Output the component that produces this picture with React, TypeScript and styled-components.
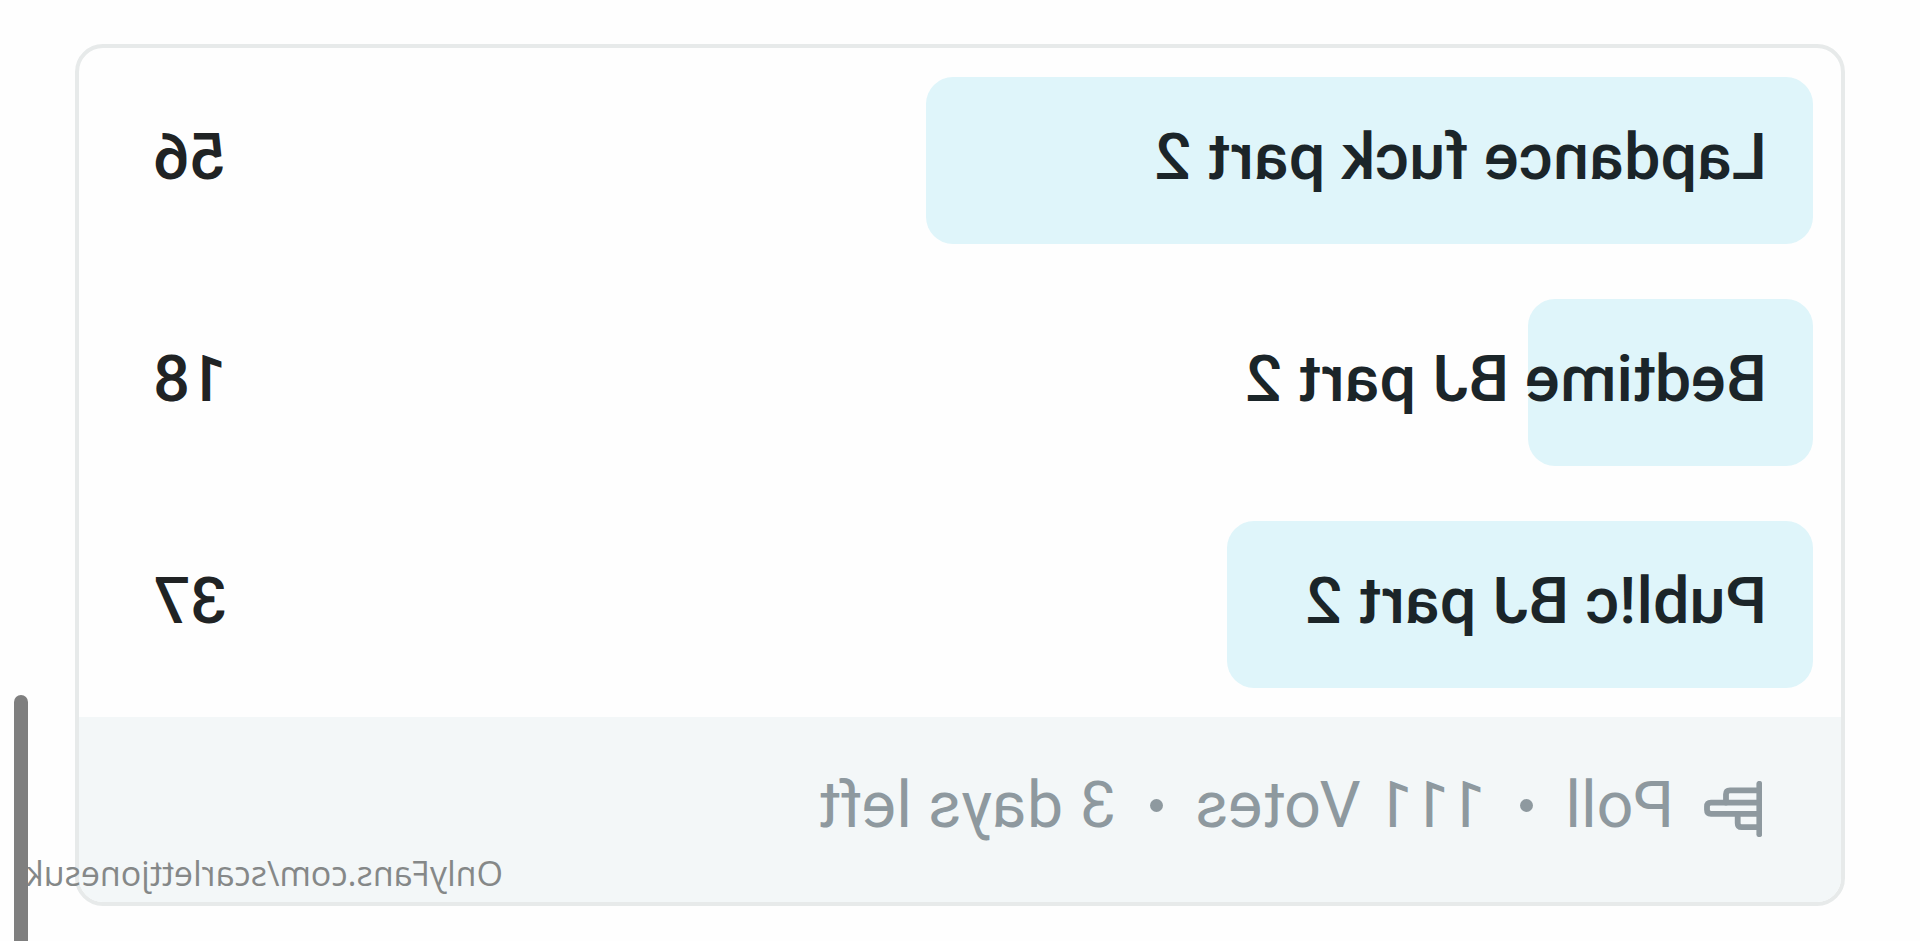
import styled, { createGlobalStyle } from "styled-components";

const options = [
  { label: "Lapdance fuck part 2", votes: 56, width: 887 },
  { label: "Bedtime BJ part 2", votes: 18, width: 285 },
  { label: "Publ!c BJ part 2", votes: 37, width: 586 },
];

const App = () => {
  return (
    <Page>
      <GlobalStyle />
      <Card>
        <Options>
          {options.map((option) => (
            <Option key={option.label}>
              <Bar style={{ width: option.width }} />
              <Label>{option.label}</Label>
              <Votes>{option.votes}</Votes>
            </Option>
          ))}
        </Options>
        <Footer>
          <PollIcon viewBox="0 0 60 56">
            <path d="M2.7 2.8V53.2" />
            <path d="M2.7 9.3H32Q36 9.3 36 13.3V21.6" />
            <path d="M2.7 21.6H51Q55 21.6 55 25.6V28.8Q55 32.8 51 32.8H2.7" />
            <path d="M2.7 46.2H20.3Q24.3 46.2 24.3 42.2V32.8" />
          </PollIcon>
          <Info>Poll</Info>
          <Dot />
          <Info>111 Votes</Info>
          <Dot />
          <Info>3 days left</Info>
        </Footer>
      </Card>
      <Watermark>OnlyFans.com/scarlettjonesuk</Watermark>
      <ScrollThumb />
    </Page>
  );
};

export default App;

const GlobalStyle = createGlobalStyle`
  * {
    box-sizing: border-box;
  }

  body {
    margin: 0;
    background-color: #fefefe;
    overflow: hidden;
  }
`;

/* the whole view is flipped left to right */
const Page = styled.div`
  position: relative;
  width: 1920px;
  height: 941px;
  padding: 44px 75px 35px 75px;
  overflow: hidden;
  background-color: #fefefe;
  font-family: Roboto, sans-serif;
  transform: scaleX(-1);
`;

const Card = styled.div`
  display: flex;
  flex-direction: column;
  width: 100%;
  height: 862px;
  border: 4px solid #e7eaea;
  border-radius: 28px;
  overflow: hidden;
`;

const Options = styled.div`
  display: flex;
  flex-direction: column;
  gap: 55px;
  height: 669px;
  padding: 29px 28px 0;
`;

const Option = styled.div`
  position: relative;
  display: flex;
  justify-content: space-between;
  align-items: center;
  height: 167px;
  padding: 0 46px 7px 46px;
  color: #202324;
  font-size: 64.9px;
  font-weight: 500;
  line-height: 76px;
  white-space: nowrap;
`;

const Bar = styled.div`
  position: absolute;
  left: 0;
  top: 0;
  height: 100%;
  border-radius: 27px;
  background-color: #dff5fa;
`;

const Label = styled.span`
  position: relative;
  color: #1b2529;
`;

const Votes = styled.span`
  position: relative;
`;

const Footer = styled.div`
  display: flex;
  align-items: center;
  flex: 1;
  padding: 0 0 9px 79px;
  background-color: #f3f7f8;
  color: #8e999f;
`;

const PollIcon = styled.svg`
  width: 60px;
  height: 56px;
  margin: 8px 28px 0 0;
  fill: none;
  stroke: #8e999f;
  stroke-width: 5.8;
  stroke-linecap: round;
`;

const Info = styled.span`
  font-size: 64.7px;
  line-height: 76px;
  white-space: nowrap;
`;

const Dot = styled.span`
  width: 13px;
  height: 13px;
  margin: 0 34px 0 32.5px;
  border-radius: 50%;
  background-color: #8e999f;
`;

const Watermark = styled.div`
  position: absolute;
  left: 1417px;
  top: 850px;
  color: #858888;
  font-family: "Open Sans", sans-serif;
  font-size: 34px;
  line-height: 46px;
  white-space: nowrap;
`;

const ScrollThumb = styled.div`
  position: absolute;
  right: 14px;
  top: 695px;
  width: 14px;
  height: 260px;
  border-radius: 7px;
  background-color: #7f7f7f;
`;
